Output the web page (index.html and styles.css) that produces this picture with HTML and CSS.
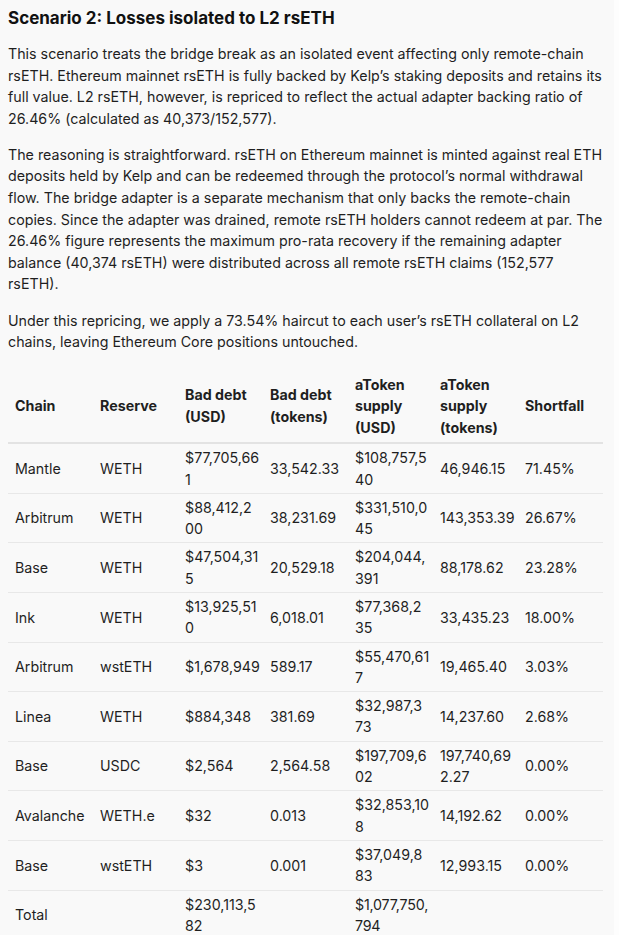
FILE: index.html
```html
<!DOCTYPE html>
<html lang="en">
<head>
<meta charset="utf-8">
<title>Scenario 2</title>
<link rel="stylesheet" href="styles.css">
</head>
<body>
<div class="page">
  <h3 class="title">Scenario 2: Losses isolated to L2 rsETH</h3>
  <p class="para">This scenario treats the bridge break as an isolated event affecting only remote-chain rsETH. Ethereum mainnet rsETH is fully backed by Kelp’s staking deposits and retains its full value. L2 rsETH, however, is repriced to reflect the actual adapter backing ratio of 26.46% (calculated as 40,373/152,577).</p>
  <p class="para">The reasoning is straightforward. rsETH on Ethereum mainnet is minted against real ETH deposits held by Kelp and can be redeemed through the protocol’s normal withdrawal flow. The bridge adapter is a separate mechanism that only backs the remote-chain copies. Since the adapter was drained, remote rsETH holders cannot redeem at par. The 26.46% figure represents the maximum pro-rata recovery if the remaining adapter balance (40,374 rsETH) were distributed across all remote rsETH claims (152,577 rsETH).</p>
  <p class="para">Under this repricing, we apply a 73.54% haircut to each user’s rsETH collateral on L2 chains, leaving Ethereum Core positions untouched.</p>
  <table class="data">
    <thead>
      <tr>
        <th>Chain</th>
        <th>Reserve</th>
        <th>Bad debt (USD)</th>
        <th>Bad debt (tokens)</th>
        <th>aToken supply (USD)</th>
        <th>aToken supply (tokens)</th>
        <th>Shortfall</th>
      </tr>
    </thead>
    <tbody>
      <tr><td>Mantle</td><td>WETH</td><td>$77,705,661</td><td>33,542.33</td><td>$108,757,540</td><td>46,946.15</td><td>71.45%</td></tr>
      <tr><td>Arbitrum</td><td>WETH</td><td>$88,412,200</td><td>38,231.69</td><td>$331,510,045</td><td>143,353.39</td><td>26.67%</td></tr>
      <tr><td>Base</td><td>WETH</td><td>$47,504,315</td><td>20,529.18</td><td>$204,044,391</td><td>88,178.62</td><td>23.28%</td></tr>
      <tr><td>Ink</td><td>WETH</td><td>$13,925,510</td><td>6,018.01</td><td>$77,368,235</td><td>33,435.23</td><td>18.00%</td></tr>
      <tr><td>Arbitrum</td><td>wstETH</td><td>$1,678,949</td><td>589.17</td><td>$55,470,617</td><td>19,465.40</td><td>3.03%</td></tr>
      <tr><td>Linea</td><td>WETH</td><td>$884,348</td><td>381.69</td><td>$32,987,373</td><td>14,237.60</td><td>2.68%</td></tr>
      <tr><td>Base</td><td>USDC</td><td>$2,564</td><td>2,564.58</td><td>$197,709,602</td><td>197,740,692.27</td><td>0.00%</td></tr>
      <tr><td>Avalanche</td><td>WETH.e</td><td>$32</td><td>0.013</td><td>$32,853,108</td><td>14,192.62</td><td>0.00%</td></tr>
      <tr><td>Base</td><td>wstETH</td><td>$3</td><td>0.001</td><td>$37,049,883</td><td>12,993.15</td><td>0.00%</td></tr>
      <tr class="total"><td>Total</td><td></td><td>$230,113,582</td><td></td><td class="tight">$1,077,750,794</td><td></td><td></td></tr>
    </tbody>
  </table>
</div>
</body>
</html>
```

FILE: styles.css
```css
html {
  background: #fdfdfd;
}
body {
  margin: 0;
  font-family: Inter, "Noto Sans", sans-serif;
  color: #1f1f1f;
}
.page {
  width: 614px;
  min-height: 935px;
  background: #f9f9f9;
  padding: 7px 11px 0 8px;
  box-sizing: border-box;
}
.title {
  margin: 0 0 14px;
  font-size: 17px;
  line-height: 22px;
  font-weight: 700;
  color: #111;
}
.para {
  margin: 0 0 14.5px;
  font-size: 14.25px;
  line-height: 21.6px;
}
.data {
  border-collapse: collapse;
  table-layout: fixed;
  width: 595px;
  margin-top: 15px;
  font-size: 14.25px;
  line-height: 21.5px;
}
.data th {
  width: 75px;
  text-align: left;
  font-weight: 700;
  padding: 6px 3px 4px 7px;
  border-bottom: 2px solid #e3e3e3;
  vertical-align: middle;
  overflow-wrap: anywhere;
}
.data td {
  padding: 3px 3px 3px 7px;
  line-height: 21.3px;
  border-bottom: 1px solid #e8e8e8;
  vertical-align: middle;
  overflow-wrap: anywhere;
}
.data td.tight {
  letter-spacing: -0.2px;
}
```
